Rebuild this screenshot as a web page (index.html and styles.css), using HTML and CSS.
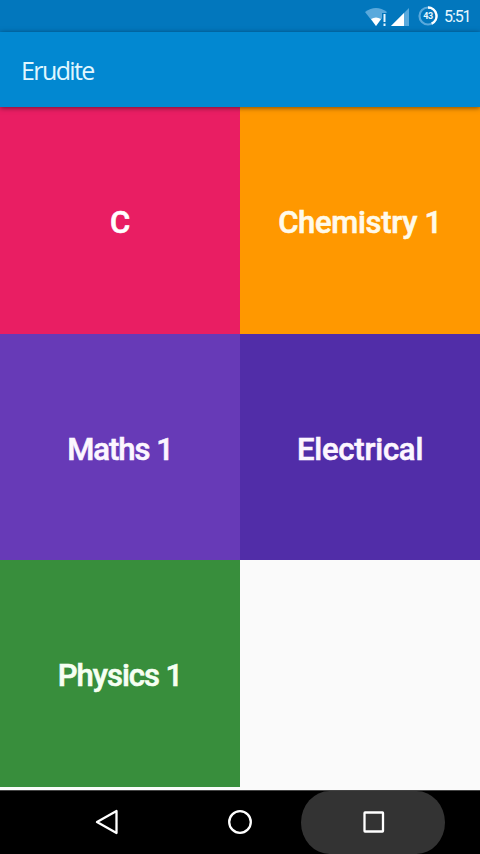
FILE: index.html
```html
<!DOCTYPE html>
<html lang="en">
<head>
<meta charset="utf-8">
<title>Erudite</title>
<link rel="stylesheet" href="styles.css">
</head>
<body>
<div class="screen">
  <div class="status">
    <svg class="wifi" width="24" height="20" viewBox="0 0 24 20">
      <path d="M0 4Q11 -4 22 4L11 18Z" fill="#5aa9dc"/>
      <path d="M6 11Q11 8 16 11L11 18Z" fill="#fff"/>
      <path d="M17 5h5v13h-5z" fill="#0277bd"/>
      <path d="M18.5 6h2v8h-2zM18.5 15.5h2v2.5h-2z" fill="#e8f7ff"/>
    </svg>
    <svg class="signal" width="20" height="20" viewBox="0 0 20 20">
      <path d="M19 0V18H1Z" fill="#5aa9dc"/>
      <path d="M14 5V18H1Z" fill="#fff"/>
    </svg>
    <div class="battery">
      <svg width="20" height="20" viewBox="0 0 20 20">
        <circle cx="10" cy="10" r="8.5" fill="none" stroke="#5aa9dc" stroke-width="2.2"/>
        <path d="M10 1.5A8.5 8.5 0 0 1 13.6 17.7" fill="none" stroke="#fff" stroke-width="2.4"/>
      </svg>
      <span class="level">43</span>
    </div>
    <span class="time">5:51</span>
  </div>
  <header class="appbar"><h1>Erudite</h1></header>
  <main class="grid">
    <div class="tile pink"><span>C</span></div>
    <div class="tile orange"><span class="chemistry">Chemistry 1</span></div>
    <div class="tile purple"><span class="maths">Maths 1</span></div>
    <div class="tile indigo"><span class="electrical">Electrical</span></div>
    <div class="tile green"><span class="physics">Physics 1</span></div>
  </main>
  <nav class="nav">
    <svg width="26" height="28" viewBox="0 0 26 28"><path d="M22.5 2V24L3 13Z" fill="none" stroke="#fff" stroke-width="2.3" stroke-linejoin="round"/></svg>
    <svg width="26" height="28" viewBox="0 0 26 28"><circle cx="13" cy="13" r="10.8" fill="none" stroke="#fff" stroke-width="2.3"/></svg>
    <div class="pressed"><svg width="26" height="28" viewBox="0 0 26 28"><rect x="4.5" y="3.5" width="18.5" height="19" rx=".5" fill="none" stroke="#fff" stroke-width="2.3"/></svg></div>
  </nav>
</div>
</body>
</html>
```
FILE: styles.css
```css
body { margin: 0; background: #fafafa; font-family: Roboto, "Open Sans", sans-serif; }
.screen { width: 480px; height: 854px; display: flex; flex-direction: column; overflow: hidden; }
.status { height: 32px; box-sizing: border-box; padding-right: 10px; background: #0277bd; display: flex; align-items: center; justify-content: flex-end; color: #e8f7ff; }
.wifi { margin-right: 1px; }
.signal { margin-right: 8px; }
.wifi, .signal { margin-top: 3px; }
.battery { position: relative; width: 20px; height: 20px; margin-right: 6px; }
.battery svg { display: block; }
.level { position: absolute; inset: 0; text-align: center; font-size: 9px; line-height: 20px; font-weight: 700; letter-spacing: -.3px; }
.time { font-size: 16px; line-height: 32px; padding-top: 2px; width: 26px; letter-spacing: -1.1px; white-space: nowrap; }
.appbar { position: relative; height: 75px; box-sizing: border-box; padding-left: 21px; background: #0288d1; box-shadow: 0 1px 5px rgba(0, 0, 0, .5); display: flex; align-items: center; }
.appbar h1 { margin: 1px 0 0; color: #e0f7ff; font: 400 25px/30px "Open Sans", sans-serif; letter-spacing: -1.6px; }
.grid { height: 683px; display: grid; grid-template-columns: 240px 240px; grid-template-rows: 227px 226px 227px; }
.tile { display: flex; align-items: center; justify-content: center; color: #fff; font-size: 31px; line-height: 40px; font-weight: 500; padding-top: 5px; -webkit-text-stroke: .6px currentColor; }
.pink { background: #e91e63; }
.orange { background: #ff9800; color: #fffaea; }
.purple { background: #673ab7; color: #fcf6ff; }
.indigo { background: #512da8; color: #fcf6ff; }
.green { background: #388e3c; color: #f6fff2; }
.chemistry { letter-spacing: -.3px; }
.maths { letter-spacing: -1px; }
.electrical { letter-spacing: -.2px; }
.physics { letter-spacing: -1px; }
.nav { flex: 1; box-sizing: border-box; padding-left: 94px; border-top: 1px solid #444; background: #000; display: grid; grid-template-columns: 133px 74px 144px; justify-content: start; align-items: center; }
.pressed { height: 63px; border-radius: 29px / 32px; background: #333; display: flex; align-items: center; justify-content: center; }
```
